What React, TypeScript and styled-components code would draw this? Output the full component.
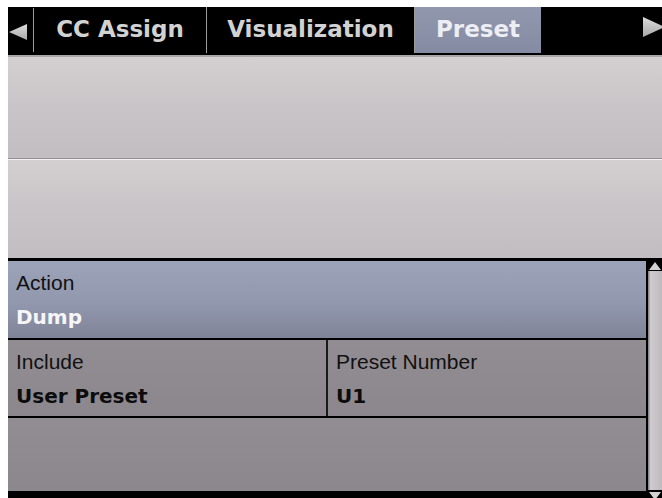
import React from "react";
import styled, { createGlobalStyle } from "styled-components";

const Global = createGlobalStyle`
  html, body {
    margin: 0;
    background: #ffffff;
    overflow: hidden;
  }
  body {
    padding: 7px 0 0 8px;
  }
`;

const tabs = [
  { label: "CC Assign", width: 173 },
  { label: "Visualization", width: 208 },
  { label: "Preset", width: 126, active: true },
];

const App = () => {
  return (
    <>
      <Global />
      <Screen>
        <TabBar>
          <ArrowBox>
            <svg width="20" height="18" viewBox="0 0 20 18">
              <defs>
                <linearGradient id="al" x1="0" y1="0" x2="0" y2="1">
                  <stop offset="0" stopColor="#dcdcdc" />
                  <stop offset="1" stopColor="#a9a9a9" />
                </linearGradient>
              </defs>
              <path d="M1 9 L19 1 L19 17 Z" fill="url(#al)" />
            </svg>
          </ArrowBox>
          {tabs.map((t) => (
            <Tab key={t.label} $w={t.width} $active={!!t.active}>
              {t.label}
            </Tab>
          ))}
          <Spacer />
          <RightArrow>
            <svg width="19" height="22" viewBox="0 0 19 22">
              <defs>
                <linearGradient id="ar" x1="0" y1="0" x2="0" y2="1">
                  <stop offset="0" stopColor="#dcdcdc" />
                  <stop offset="1" stopColor="#a9a9a9" />
                </linearGradient>
              </defs>
              <path d="M0 1 L22 11 L0 21 Z" fill="url(#ar)" />
            </svg>
          </RightArrow>
        </TabBar>

        <EmptyItem $h={101} $line="bottom" />
        <EmptyItem $h={98} $line="top" />

        <ListArea>
          <List>
            <Item $tone="blue" $h={77}>
              <Cell>
                <Label>Action</Label>
                <Value $light>Dump</Value>
              </Cell>
            </Item>
            <Item $tone="gray" $h={76}>
              <Cell $w={320} $divider>
                <Label>Include</Label>
                <Value>User Preset</Value>
              </Cell>
              <Cell>
                <Label>Preset Number</Label>
                <Value>U1</Value>
              </Cell>
            </Item>
            <Item $tone="gray" $h={73} />
          </List>
          <ScrollBar>
            <ScrollButton>
              <svg width="12" height="8" viewBox="0 0 12 8">
                <path d="M6 0 L12 8 L0 8 Z" fill="#d4d2d4" />
              </svg>
            </ScrollButton>
            <Track />
            <ScrollButton>
              <svg width="12" height="8" viewBox="0 0 12 8">
                <path d="M0 0 L12 0 L6 8 Z" fill="#d4d2d4" />
              </svg>
            </ScrollButton>
          </ScrollBar>
        </ListArea>
      </Screen>
    </>
  );
};

export default App;

const Screen = styled.div`
  width: 654px;
  height: 500px;
  display: flex;
  flex-direction: column;
  background: #000;
  overflow: hidden;
`;

const TabBar = styled.div`
  height: 48px;
  flex-shrink: 0;
  display: flex;
  align-items: flex-start;
  background: #000;
  border-bottom: 2px solid #a9a6a8;
`;

const ArrowBox = styled.div`
  width: 25px;
  height: 44px;
  margin-top: 1px;
  display: flex;
  align-items: center;
  border-right: 1px solid #9c9c9c;
  svg {
    margin-top: 4px;
  }
`;

const Tab = styled.div<{ $w: number; $active: boolean }>`
  width: ${(p) => p.$w}px;
  height: 46px;
  display: flex;
  align-items: center;
  justify-content: center;
  box-sizing: border-box;
  font-family: "DejaVu Sans", sans-serif;
  font-weight: bold;
  font-size: 23px;
  color: ${(p) => (p.$active ? "#eceef4" : "#d2d2d2")};
  background: ${(p) =>
    p.$active ? "linear-gradient(#9197ad, #858ba2)" : "transparent"};
  border-right: ${(p) => (p.$active ? "none" : "1px solid #9c9c9c")};
  padding-bottom: 2px;
`;

const Spacer = styled.div`
  flex: 1;
`;

const RightArrow = styled.div`
  width: 19px;
  height: 46px;
  display: flex;
  align-items: center;
  overflow: hidden;
  svg {
    margin-top: -6px;
  }
`;

const EmptyItem = styled.div<{ $h: number; $line: "top" | "bottom" }>`
  height: ${(p) => p.$h}px;
  flex-shrink: 0;
  background: linear-gradient(#d4d0d1, #c9c5c8 45%, #c1bdc1);
  border-bottom: ${(p) => (p.$line === "bottom" ? "1px solid #939093" : "none")};
  border-top: ${(p) => (p.$line === "top" ? "1px solid #f2f0f1" : "none")};
`;

const ListArea = styled.div`
  flex: 1;
  display: flex;
  border-top: 3px solid #000;
`;

const List = styled.div`
  flex: 1;
  display: flex;
  flex-direction: column;
`;

const Item = styled.div<{ $tone: "blue" | "gray"; $h: number }>`
  height: ${(p) => p.$h}px;
  display: flex;
  border-bottom: 2px solid #000;
  background: ${(p) =>
    p.$tone === "blue"
      ? "linear-gradient(#9da3b9, #9197ad 55%, #7f8498)"
      : "linear-gradient(#928d92, #8c878c)"};
`;

const Cell = styled.div<{ $w?: number; $divider?: boolean }>`
  ${(p) => (p.$w ? `width: ${p.$w}px;` : "flex: 1;")}
  box-sizing: border-box;
  padding: 10px 0 0 8px;
  border-right: ${(p) => (p.$divider ? "2px solid #1a1a1a" : "none")};
  display: flex;
  flex-direction: column;
  gap: 10px;
`;

const Label = styled.div`
  font-family: "Liberation Sans", Arial, sans-serif;
  font-size: 21px;
  line-height: 24px;
  color: #111;
`;

const Value = styled.div<{ $light?: boolean }>`
  font-family: "DejaVu Sans", sans-serif;
  font-weight: bold;
  font-size: 20px;
  line-height: 24px;
  color: ${(p) => (p.$light ? "#f6f6f8" : "#0c0c0c")};
`;

const ScrollBar = styled.div`
  width: 14px;
  display: flex;
  flex-direction: column;
  border-left: 2px solid #000;
  background: #000;
`;

const ScrollButton = styled.div`
  height: 9px;
  display: flex;
  align-items: center;
  justify-content: center;
  flex-shrink: 0;
`;

const Track = styled.div`
  height: 219px;
  margin: 1px 0;
  background: linear-gradient(90deg, #8d8a8d 0, #8d8a8d 1px, #cfcbcf 2px, #bebabe);
`;
